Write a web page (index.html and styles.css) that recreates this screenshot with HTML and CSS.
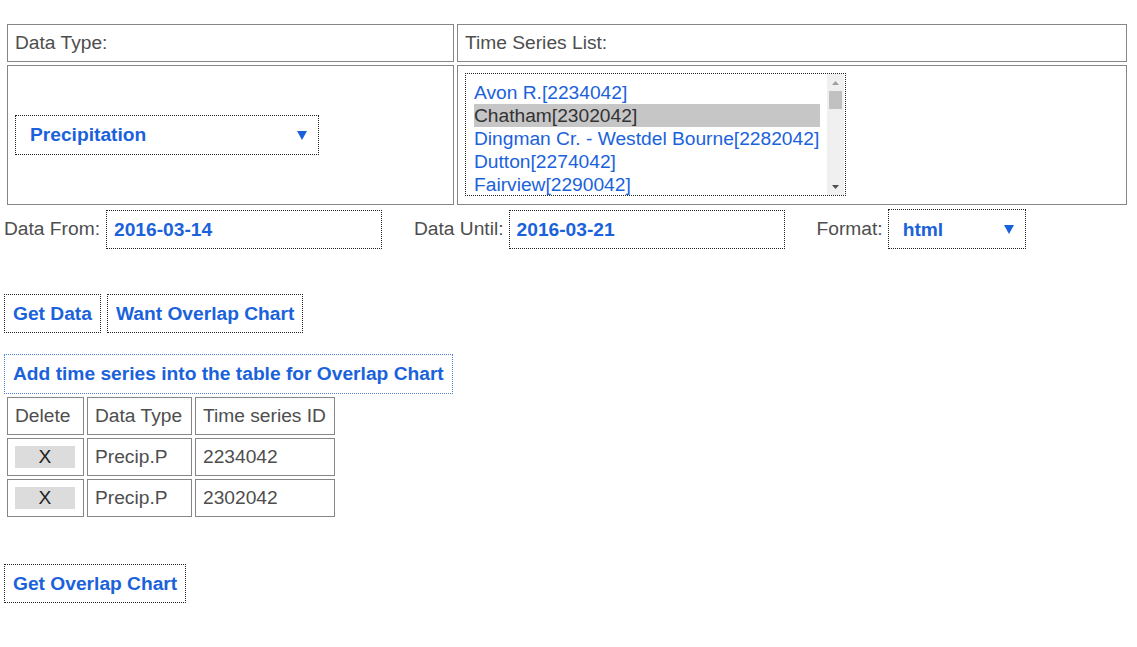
FILE: index.html
```html
<!DOCTYPE html>
<html>
<head>
<meta charset="utf-8">
<title>Time Series</title>
<link rel="stylesheet" href="styles.css">
</head>
<body>
<table class="layout">
  <colgroup><col class="col-type"><col class="col-list"></colgroup>
  <tr>
    <td class="head-cell">Data Type:</td>
    <td class="head-cell">Time Series List:</td>
  </tr>
  <tr>
    <td class="pick-cell">
      <div class="dropdown dropdown-type">
        <span>Precipitation</span>
        <svg class="caret" width="10" height="9" viewBox="0 0 10 9"><polygon points="0,0 10,0 5,9" fill="#1a62dc"/></svg>
      </div>
    </td>
    <td class="pick-cell">
      <div class="listbox">
        <div class="options">
          <div class="option">Avon R.[2234042]</div>
          <div class="option option-selected">Chatham[2302042]</div>
          <div class="option">Dingman Cr. - Westdel Bourne[2282042]</div>
          <div class="option">Dutton[2274042]</div>
          <div class="option">Fairview[2290042]</div>
        </div>
        <div class="scrollbar">
          <div class="scroll-btn"><svg width="7" height="4" viewBox="0 0 7 4"><polygon points="0,4 7,4 3.5,0" fill="#a0a0a0"/></svg></div>
          <div class="thumb"></div>
          <div class="scroll-space"></div>
          <div class="scroll-btn"><svg width="7" height="4" viewBox="0 0 7 4"><polygon points="0,0 7,0 3.5,4" fill="#505050"/></svg></div>
        </div>
      </div>
    </td>
  </tr>
</table>

<div class="range-row">
  <span class="label">Data From:</span>
  <div class="field field-first">2016-03-14</div>
  <span class="label label-gap">Data Until:</span>
  <div class="field">2016-03-21</div>
  <span class="label label-gap">Format:</span>
  <div class="dropdown dropdown-format">
    <span>html</span>
    <svg class="caret" width="10" height="9" viewBox="0 0 10 9"><polygon points="0,0 10,0 5,9" fill="#1a62dc"/></svg>
  </div>
</div>

<div class="action-row">
  <button class="btn">Get Data</button>
  <button class="btn btn-next">Want Overlap Chart</button>
</div>

<button class="btn btn-add">Add time series into the table for Overlap Chart</button>

<table class="series">
  <tr>
    <td class="c-del">Delete</td>
    <td class="c-type">Data Type</td>
    <td class="c-id">Time series ID</td>
  </tr>
  <tr>
    <td><div class="x-btn">X</div></td>
    <td>Precip.P</td>
    <td>2234042</td>
  </tr>
  <tr>
    <td><div class="x-btn">X</div></td>
    <td>Precip.P</td>
    <td>2302042</td>
  </tr>
</table>

<button class="btn btn-final">Get Overlap Chart</button>
</body>
</html>
```

FILE: styles.css
```css
* { box-sizing: border-box; }

body {
  margin: 0;
  padding: 21px 4px 0;
  font-family: "Liberation Sans", Arial, sans-serif;
  font-size: 19.2px;
  color: #4e4e4e;
  background: #fff;
}

.layout {
  border-collapse: separate;
  border-spacing: 3px;
  table-layout: fixed;
  width: 1126px;
}
.col-type { width: 447px; }
.col-list { width: 670px; }

.head-cell {
  border: 1px solid #868686;
  padding: 7px 7px;
  line-height: 22px;
  text-align: left;
}

.pick-cell {
  border: 1px solid #868686;
  padding: 7px 7px 8px;
  vertical-align: middle;
}

.dropdown {
  display: flex;
  align-items: center;
  justify-content: space-between;
  height: 40px;
  border: 1px dotted #222;
  padding: 1px 11px 0 14px;
  color: #1a62dc;
  font-weight: bold;
  line-height: 22px;
}
.dropdown-type { width: 304px; }
.dropdown-format { width: 138px; margin-left: 5px; }
.caret { display: block; }

.listbox {
  display: flex;
  width: 381px;
  height: 123px;
  border: 1px dotted #222;
}
.options {
  flex: 1;
  padding: 7px 7px 0 8px;
  overflow: hidden;
}
.option {
  line-height: 23px;
  white-space: nowrap;
  color: #1a62dc;
}
.option-selected {
  background: #c6c6c6;
  color: #333;
}
.scrollbar {
  width: 17px;
  margin-right: 1px;
  background: #f0f0f0;
  display: flex;
  flex-direction: column;
}
.scroll-btn {
  height: 17px;
  display: flex;
  align-items: center;
  justify-content: center;
}
.thumb {
  height: 18px;
  margin: 0 2px;
  background: #c1c1c1;
}
.scroll-space { flex: 1; }

.range-row {
  display: flex;
  align-items: center;
  height: 40px;
  margin-top: 1px;
}
.label { line-height: 22px; }
.label-gap { margin-left: 32px; }
.field {
  width: 276px;
  height: 39px;
  margin-left: 5px;
  border: 1px dotted #222;
  padding: 1px 7px 0;
  display: flex;
  align-items: center;
  color: #1a62dc;
  font-weight: bold;
}
.field-first { margin-left: 6px; }

.action-row {
  display: flex;
  gap: 6px;
  margin-top: 45px;
}

.btn {
  display: block;
  height: 39px;
  padding: 0 8px;
  border: 1px dotted #222;
  background: #fff;
  color: #1a62dc;
  font-family: inherit;
  font-size: 19.2px;
  font-weight: bold;
  line-height: 22px;
  cursor: pointer;
}
.btn-add {
  margin-top: 21px;
  height: 40px;
  border-color: #4a7fd4;
}
.btn-final { margin-top: 44px; }

.series {
  border-collapse: separate;
  border-spacing: 3px;
  table-layout: fixed;
  width: 334px;
}
.series td {
  border: 1px solid #868686;
  padding: 7px;
  line-height: 22px;
  white-space: nowrap;
}
.c-del { width: 77px; }
.c-type { width: 105px; }
.c-id { width: 140px; }

.x-btn {
  width: 60px;
  height: 22px;
  background: #dcdcdc;
  color: #222;
  text-align: center;
  line-height: 22px;
}
```
